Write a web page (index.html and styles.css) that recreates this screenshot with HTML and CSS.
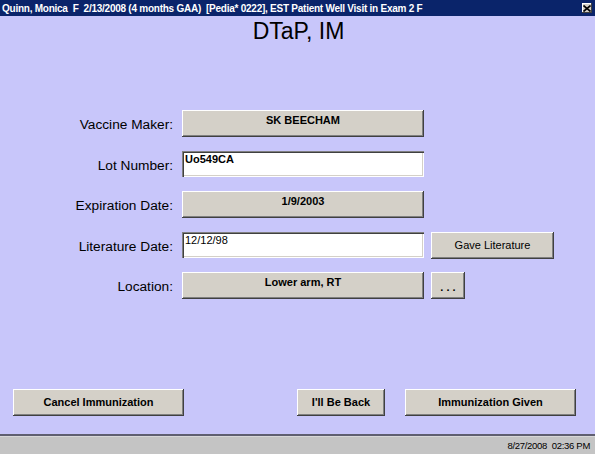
FILE: index.html
```html
<!DOCTYPE html>
<html>
<head>
<meta charset="utf-8">
<link rel="stylesheet" href="styles.css">
</head>
<body>
<div class="window">
  <div class="titlebar">
    <span class="title-text">Quinn, Monica&nbsp; F&nbsp; 2/13/2008 (4 months GAA)&nbsp; [Pedia* 0222], EST Patient Well Visit in Exam 2 F</span>
    <span class="close-btn"><svg width="8" height="7" viewBox="0 0 8 7"><path d="M0.5 0.5 L7.5 6.5 M7.5 0.5 L0.5 6.5" stroke="#000" stroke-width="1.6"/></svg></span>
  </div>
  <div class="main">
    <h1 class="heading">DTaP, IM</h1>
    <div class="form">
      <div class="label">Vaccine Maker:</div>
      <div class="btn field-btn">SK BEECHAM</div>
      <div></div>

      <div class="label">Lot Number:</div>
      <div class="input bold">Uo549CA</div>
      <div></div>

      <div class="label">Expiration Date:</div>
      <div class="btn field-btn">1/9/2003</div>
      <div></div>

      <div class="label">Literature Date:</div>
      <div class="input">12/12/98</div>
      <div class="btn plain wide">Gave Literature</div>

      <div class="label">Location:</div>
      <div class="btn field-btn">Lower arm, RT</div>
      <div class="btn plain dots">. . .</div>
    </div>
    <div class="actions">
      <div class="btn action cancel">Cancel Immunization</div>
      <div class="spacer"></div>
      <div class="btn action back">I'll Be Back</div>
      <div class="btn action given">Immunization Given</div>
    </div>
  </div>
  <div class="statusbar">
    <span class="status-time">8/27/2008&nbsp; 02:36 PM</span>
  </div>
</div>
</body>
</html>
```
FILE: styles.css
```css
html, body {
  margin: 0;
  padding: 0;
}
body {
  width: 595px;
  height: 454px;
  overflow: hidden;
  font-family: "Liberation Sans", Arial, sans-serif;
}
.window {
  width: 595px;
  height: 454px;
  display: flex;
  flex-direction: column;
  background: #c8c6fa;
}
.titlebar {
  height: 16px;
  background: #0a246a;
  color: #fff;
  display: flex;
  align-items: center;
  justify-content: space-between;
  padding: 0 3px 0 2px;
  flex: none;
}
.title-text {
  font-family: "Liberation Sans", Arial, sans-serif;
  font-weight: bold;
  font-size: 10px;
  letter-spacing: -0.25px;
  white-space: nowrap;
}
.close-btn {
  width: 10px;
  height: 10px;
  background: #d4d0c8;
  box-shadow: inset -1px -1px #404040, inset 1px 1px #fff;
  display: flex;
  align-items: center;
  justify-content: center;
}
.main {
  flex: 1;
  display: flex;
  flex-direction: column;
  padding: 2px 0 0 0;
}
.heading {
  margin: 0;
  text-align: center;
  font-weight: normal;
  font-size: 23px;
  line-height: 26px;
  color: #000;
  padding-left: 2px;
}
.form {
  margin-top: 66px;
  display: grid;
  grid-template-columns: 173px 243px 123px;
  grid-auto-rows: 27px;
  column-gap: 8px;
  row-gap: 13.5px;
}
.form > :nth-child(3n+2) {
  margin-left: 1px;
}
.label {
  font-size: 13.7px;
  color: #000;
  text-align: right;
  line-height: 27px;
  padding-top: 1px;
}
.btn {
  background: #d4d0c8;
  box-shadow: inset -1px -1px #404040, inset 1px 1px #fff, inset -2px -2px #808080;
  font-size: 11px;
  color: #000;
  box-sizing: border-box;
  height: 27px;
  text-align: center;
}
.field-btn {
  font-weight: bold;
  padding-top: 3px;
  line-height: 14px;
}
.plain {
  line-height: 27px;
  margin-left: -1px;
}
.wide {
  width: 123px;
}
.dots {
  width: 34px;
  font-weight: bold;
  line-height: 30px;
}
.input {
  background: #fff;
  box-shadow: inset 1px 1px #808080, inset 2px 2px #404040, inset -1px -1px #fff, inset -2px -2px #d4d0c8;
  font-size: 11px;
  padding: 2px 3px;
  line-height: 13px;
  height: 26px;
  box-sizing: border-box;
}
.bold {
  font-weight: bold;
}
.actions {
  margin-top: auto;
  margin-bottom: 18px;
  display: flex;
  padding: 0 19px 0 13px;
}
.action {
  font-weight: bold;
  height: 27px;
  line-height: 27px;
}
.cancel {
  width: 171px;
}
.spacer {
  flex: 1;
}
.back {
  width: 88px;
  margin-right: 20px;
}
.given {
  width: 171px;
}
.statusbar {
  flex: none;
  height: 18px;
  border-top: 2px solid #5f5f70;
  background: #c4c4c4;
  box-shadow: inset 0 1px #d8d8d8;
  display: flex;
  justify-content: flex-end;
  align-items: center;
  padding-right: 5px;
}
.status-time {
  font-size: 9.5px;
  letter-spacing: -0.3px;
  color: #000;
}
```
